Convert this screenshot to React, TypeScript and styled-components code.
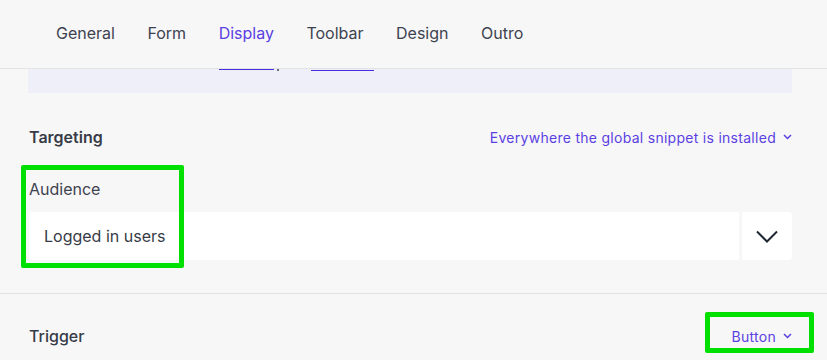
import React from "react";
import styled, { createGlobalStyle } from "styled-components";

const GlobalStyle = createGlobalStyle`
  body {
    margin: 0;
    background: #f7f7f7;
    font-family: Inter, "Noto Sans", sans-serif;
    color: #363b47;
  }
`;

const Page = styled.div`
  position: relative;
  width: 827px;
  height: 360px;
  overflow: hidden;
  background: #f7f7f7;
`;

const Header = styled.nav`
  height: 68px;
  display: flex;
  align-items: center;
  gap: 32.5px;
  padding-left: 56px;
  border-bottom: 1px solid #e3e3e5;
  background: #f7f7f7;
`;

const Tab = styled.span<{ $active?: boolean }>`
  font-size: 16px;
  color: ${(p) => (p.$active ? "#5b3fe3" : "#3d4250")};
  margin-top: -2px;
`;

const Content = styled.div`
  padding: 0 35px 0 29px;
`;

const Banner = styled.div`
  margin-left: -1px;
  height: 24px;
  background: #eeeff8;
  display: flex;
  align-items: flex-start;
  padding-left: 191px;
`;

const LinkMark = styled.span<{ $w: number; $off?: number }>`
  width: ${(p) => p.$w}px;
  height: 1px;
  margin-top: ${(p) => p.$off ?? 0}px;
  background: #4a2fe0;
`;

const Comma = styled.span`
  width: 2px;
  height: 2px;
  margin: 0 32px 0 3px;
  background: #6b6f7a;
`;

const Row = styled.div<{ $top: number }>`
  display: flex;
  align-items: center;
  justify-content: space-between;
  margin-top: ${(p) => p.$top}px;
  height: 24px;
`;

const SectionTitle = styled.h3`
  margin: 0;
  font-size: 16px;
  font-weight: 600;
  color: #363b47;
`;

const PlainTitle = styled.span`
  font-size: 16px;
  font-weight: 500;
  color: #363b47;
`;

const Picker = styled.span`
  display: flex;
  align-items: center;
  gap: 7px;
  font-size: 14px;
  color: #5b3fe3;
  letter-spacing: 0.28px;
`;

const Label = styled.label`
  display: block;
  margin-top: 28px;
  height: 24px;
  line-height: 24px;
  font-size: 16px;
  color: #3d4250;
`;

const Select = styled.div`
  margin-top: 11px;
  height: 48px;
  display: flex;
  gap: 3px;
`;

const SelectValue = styled.div`
  flex: 1;
  background: #fff;
  display: flex;
  align-items: center;
  padding-left: 15px;
  font-size: 16px;
  color: #363b47;
  border-radius: 3px 0 0 3px;
`;

const SelectButton = styled.div`
  width: 50px;
  background: #fff;
  border-radius: 0 4px 4px 0;
  display: flex;
  align-items: center;
  justify-content: center;
`;

const Divider = styled.hr`
  margin: 33px 0 0;
  border: 0;
  border-top: 1px solid #e3e3e5;
`;

const Mark = styled.div<{ $x: number; $y: number; $w: number; $h: number }>`
  position: absolute;
  left: ${(p) => p.$x}px;
  top: ${(p) => p.$y}px;
  width: ${(p) => p.$w}px;
  height: ${(p) => p.$h}px;
  box-sizing: border-box;
  border: 5px solid #00e000;
  border-radius: 2px;
`;

const SmallChevron = () => (
  <svg width="9" height="6" viewBox="0 0 9 6" fill="none">
    <path d="M1 1l3.5 3.5L8 1" stroke="#5b3fe3" strokeWidth="1.5" />
  </svg>
);

const tabs = ["General", "Form", "Display", "Toolbar", "Design", "Outro"];

export default function App() {
  return (
    <Page>
      <GlobalStyle />
      <Header>
        {tabs.map((t) => (
          <Tab key={t} $active={t === "Display"}>
            {t}
          </Tab>
        ))}
      </Header>
      <Content>
        <Banner>
          <LinkMark $w={55} />
          <Comma />
          <LinkMark $w={63} $off={1} />
        </Banner>
        <Row $top={32}>
          <SectionTitle>Targeting</SectionTitle>
          <Picker>
            Everywhere the global snippet is installed
            <SmallChevron />
          </Picker>
        </Row>
        <Label>Audience</Label>
        <Select>
          <SelectValue>Logged in users</SelectValue>
          <SelectButton>
            <svg width="22" height="13" viewBox="0 0 22 13" fill="none">
              <path d="M1 1.5l10 10 10-10" stroke="#1f2733" strokeWidth="2" />
            </svg>
          </SelectButton>
        </Select>
      </Content>
      <Divider />
      <Content>
        <Row $top={30}>
          <PlainTitle>Trigger</PlainTitle>
          <Picker>
            Button
            <SmallChevron />
          </Picker>
        </Row>
      </Content>
      <Mark $x={21} $y={165} $w={163} $h={103} />
      <Mark $x={705} $y={312} $w={109} $h={41} />
    </Page>
  );
}
